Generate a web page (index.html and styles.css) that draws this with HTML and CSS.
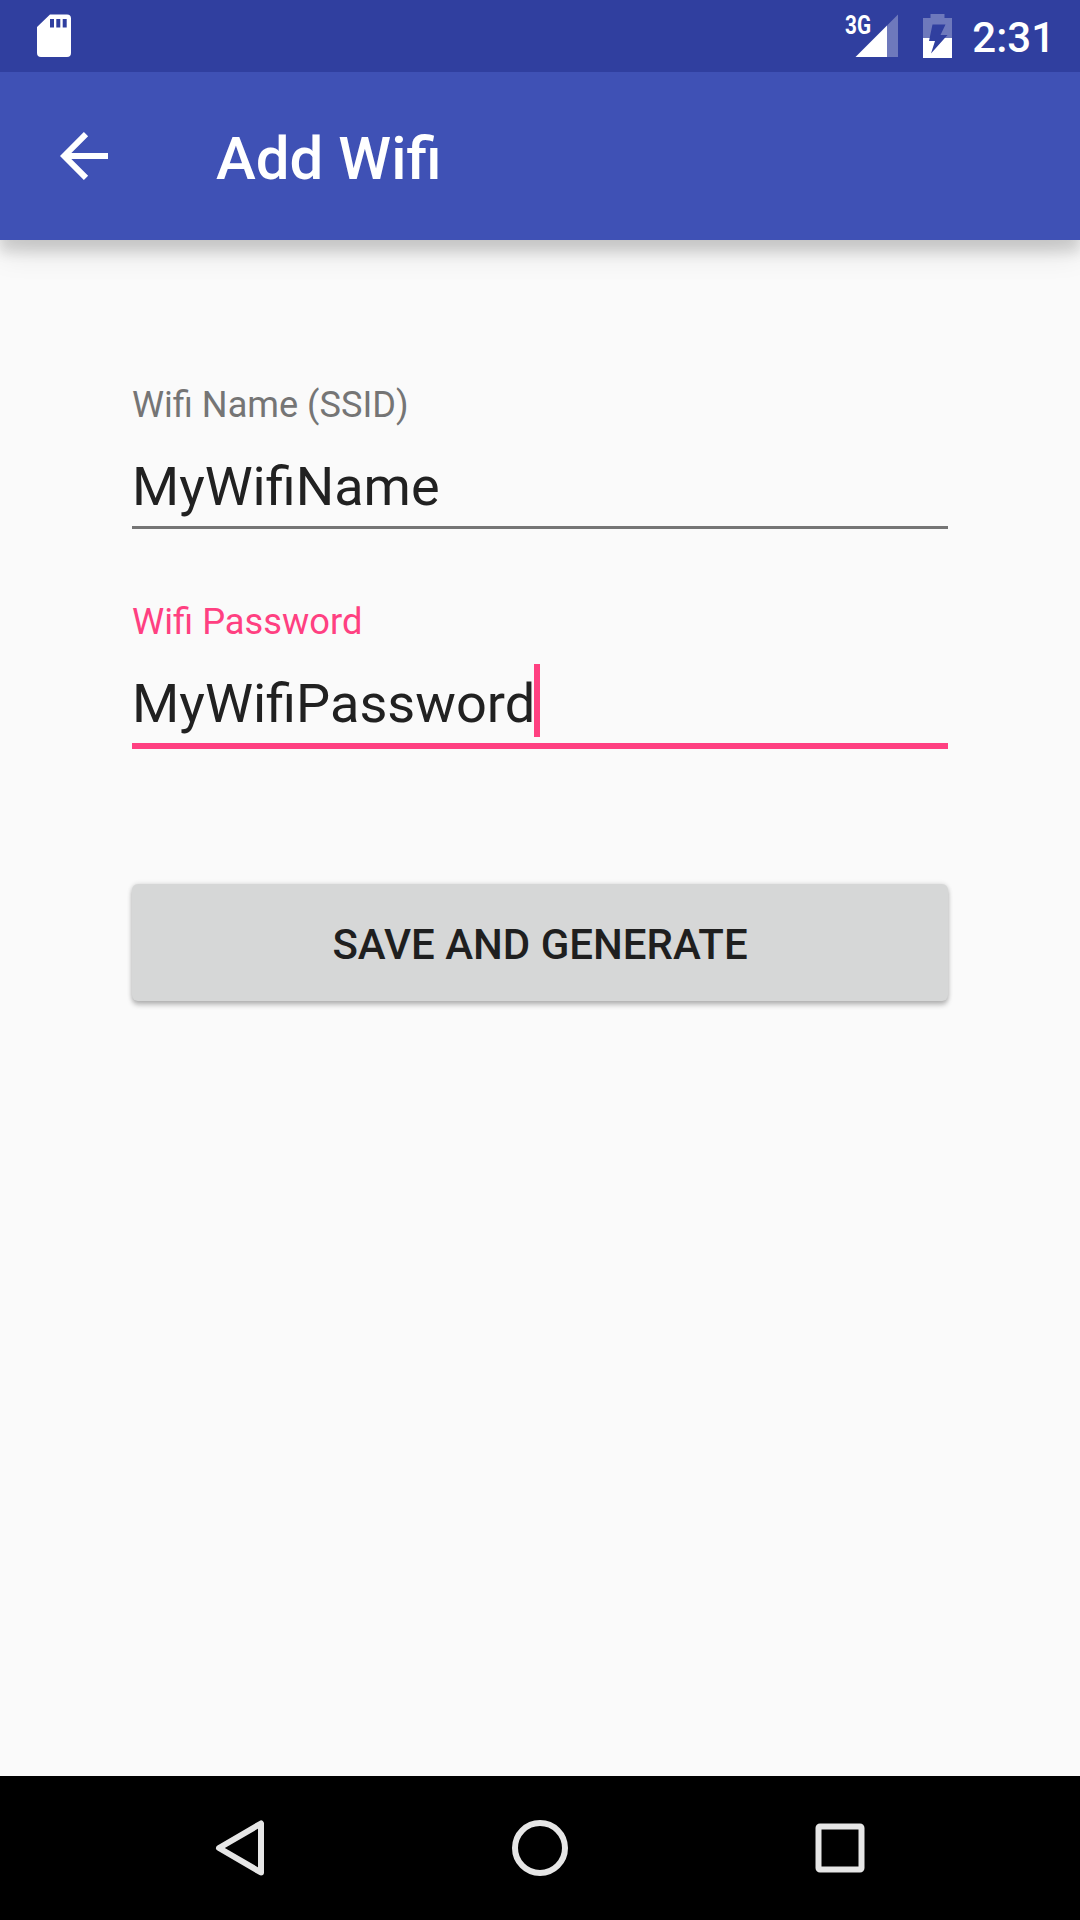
FILE: index.html
```html
<!DOCTYPE html>
<html lang="en">
<head>
<meta charset="utf-8">
<title>Add Wifi</title>
<link rel="stylesheet" href="styles.css">
</head>
<body>
<div class="screen">
  <div class="status-bar">
    <svg class="sd-card" width="36" height="44" viewBox="0 0 36 44"><path fill="#fff" fill-rule="evenodd" d="M14 .5H31a4 4 0 0 1 4 4V39a4 4 0 0 1-4 4H5a4 4 0 0 1-4-4V13zM14 5v8.500h4V5zM20.300 5v8.500h4V5zM26.700 5v8.500h4V5z"/></svg>
    <div class="status-icons">
      <svg class="signal" width="60" height="50" viewBox="-6 -6 60 50">
        <path fill="#fff" fill-opacity=".3" d="M43 11.500 54 .5V43H43z"/>
        <path fill="#fff" d="M11.500 43 43 11.500V43z"/>
        <text class="network" x="1" y="19.500" textLength="26" lengthAdjust="spacingAndGlyphs">3G</text>
      </svg>
      <svg class="battery" width="29" height="44" viewBox="0 0 29 44">
        <path fill="#fff" fill-opacity=".3" d="M7.500 0h14v4H29v20H0V4h7.500z"/>
        <path fill="#fff" d="M0 24h29v20H0z"/>
        <path fill="#303f9f" d="M9.500 10.500H22.500L17.500 21H24.500L8 39.500 12 27H6z"/>
      </svg>
      <span class="clock">2:31</span>
    </div>
  </div>
  <header class="app-bar">
    <svg class="back" width="48" height="48" viewBox="0 0 48 48"><path fill="none" stroke="#fff" stroke-width="6" d="M26 2.100 4.200 24 26 45.900M5 24H48"/></svg>
    <h1 class="title">Add Wifi</h1>
  </header>
  <main class="form">
    <div class="field">
      <label class="label">Wifi Name (SSID)</label>
      <div class="value">MyWifiName</div>
    </div>
    <div class="field focused">
      <label class="label">Wifi Password</label>
      <div class="value">MyWifiPassword<span class="caret"></span></div>
    </div>
    <button class="save">SAVE AND GENERATE</button>
  </main>
  <nav class="nav-bar">
    <svg width="60" height="60" viewBox="0 0 60 60"><path d="M51 5.500V54.500L9 30z"/></svg>
    <svg width="60" height="60" viewBox="0 0 60 60"><circle cx="30" cy="30" r="25"/></svg>
    <svg width="60" height="60" viewBox="0 0 60 60"><rect x="8.500" y="8.500" width="43" height="43" rx="1.500"/></svg>
  </nav>
</div>
</body>
</html>
```
FILE: styles.css
```css
* {
  box-sizing: border-box;
}

body {
  margin: 0;
  font-family: Roboto, sans-serif;
}

.screen {
  display: flex;
  flex-direction: column;
  width: 1080px;
  height: 1920px;
  background: #fafafa;
  overflow: hidden;
}

.status-bar {
  position: relative;
  z-index: 1;
  display: flex;
  justify-content: space-between;
  align-items: flex-start;
  height: 72px;
  padding: 14px 25px 0 36px;
  background: #303f9f;
}

.status-icons {
  display: flex;
  align-items: flex-start;
}

.signal {
  margin-top: -6px;
}

.battery {
  margin-left: 25px;
}

.network {
  font-size: 26px;
  font-weight: 700;
  fill: #fff;
}

.clock {
  margin-left: 20px;
  color: #fff;
  font-size: 42px;
  font-weight: 500;
  line-height: 48px;
}

.app-bar {
  display: flex;
  align-items: center;
  height: 168px;
  padding-left: 60px;
  background: #3f51b5;
  box-shadow: 0 12px 12px rgba(0, 0, 0, 0.12), 0 8px 32px rgba(0, 0, 0, 0.14);
}

.title {
  margin: 0;
  padding: 5px 0 0 108px;
  color: #fff;
  font-size: 60px;
  font-weight: 500;
  line-height: 70px;
}

.form {
  display: flex;
  flex: 1;
  flex-direction: column;
  gap: 72px;
  padding: 144px 132px 0;
}

.field {
  display: flex;
  flex-direction: column;
  gap: 24px;
}

.label {
  color: #757575;
  font-size: 36.15px;
  line-height: 42px;
}

.value {
  display: flex;
  height: 79px;
  border-bottom: 3px solid #757575;
  color: #212121;
  font-size: 54px;
  line-height: 73px;
}

.focused {
  height: 148px;
}

.focused .label {
  color: #ff4081;
  font-size: 36.3px;
}

.focused .value {
  height: 82px;
  border-bottom: 6px solid #ff4081;
  font-size: 54.15px;
}

.caret {
  width: 6px;
  height: 73px;
  margin: -3px 0 0 -1px;
  background: #ff4081;
}

.save {
  height: 117px;
  margin-top: 63px;
  padding: 4px 0 0;
  border: 0;
  border-radius: 6px;
  background: #d6d7d7;
  color: #1f1f1f;
  font-family: inherit;
  font-size: 42px;
  font-weight: 500;
  line-height: 50px;
  box-shadow: 0 4px 5px rgba(0, 0, 0, 0.24), 0 0 5px rgba(0, 0, 0, 0.14);
}

.nav-bar {
  display: flex;
  justify-content: center;
  align-items: center;
  gap: 240px;
  height: 144px;
  background: #000;
}

.nav-bar svg {
  fill: none;
  stroke: #e6e6e6;
  stroke-width: 6px;
  stroke-linejoin: round;
}
```
